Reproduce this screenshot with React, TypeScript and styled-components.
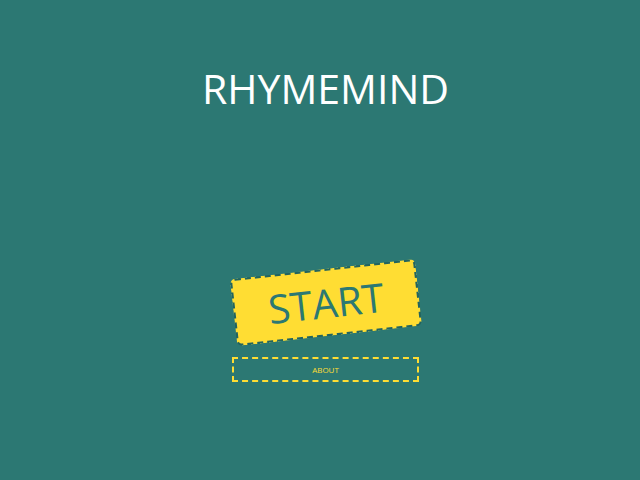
import React from "react";
import styled, { createGlobalStyle } from "styled-components";

const Global = createGlobalStyle`
  html, body { margin: 0; padding: 0; background: #2c7873; }
  body { font-family: "Open Sans", "Noto Sans", sans-serif; }
`;

const Page = styled.div`
  width: 640px;
  height: 480px;
  box-sizing: border-box;
  padding-left: 11px;
  display: flex;
  flex-direction: column;
  align-items: center;
`;

const Title = styled.h1`
  margin: 62px 0 0;
  font-size: 41px;
  font-weight: 400;
  color: #ffffff;
  line-height: 52px;
`;

const Menu = styled.div`
  margin-top: 155px;
  display: flex;
  flex-direction: column;
  align-items: center;
`;

const StartButton = styled.button`
  width: 186px;
  height: 67px;
  box-sizing: border-box;
  background: #ffdd33;
  border: 2px dashed #23645f;
  border-radius: 5px;
  color: #2c7873;
  font-family: inherit;
  font-size: 40px;
  line-height: 1;
  padding: 0;
  transform: rotate(-6.3deg);
  cursor: pointer;
`;

const AboutButton = styled.button`
  margin-top: 21px;
  width: 187px;
  height: 25px;
  box-sizing: border-box;
  background: transparent;
  border: 2px dashed #ffdd33;
  color: #ffdd33;
  font-family: inherit;
  font-size: 8px;
  padding: 0;
  cursor: pointer;
`;

export default function App() {
  return (
    <>
      <Global />
      <Page>
        <Title>RHYMEMIND</Title>
        <Menu>
          <StartButton>START</StartButton>
          <AboutButton>ABOUT</AboutButton>
        </Menu>
      </Page>
    </>
  );
}
